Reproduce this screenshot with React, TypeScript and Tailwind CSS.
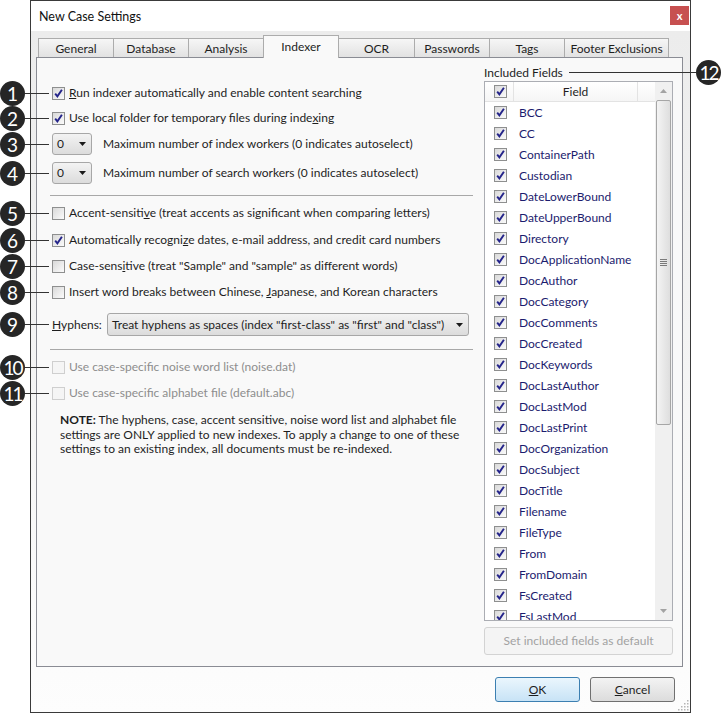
import type { ReactNode } from 'react';

const FIELDS = [
    'BCC', 'CC', 'ContainerPath', 'Custodian', 'DateLowerBound', 'DateUpperBound', 'Directory',
    'DocApplicationName', 'DocAuthor', 'DocCategory', 'DocComments', 'DocCreated', 'DocKeywords',
    'DocLastAuthor', 'DocLastMod', 'DocLastPrint', 'DocOrganization', 'DocSubject', 'DocTitle',
    'Filename', 'FileType', 'From', 'FromDomain', 'FsCreated', 'FsLastMod',
];

const TABS = [
    { label: 'General', w: 'w-[76px]' },
    { label: 'Database', w: 'w-[76px]' },
    { label: 'Analysis', w: 'w-[76px]' },
    { label: 'Indexer', w: 'w-[76px]', active: true },
    { label: 'OCR', w: 'w-[77px]' },
    { label: 'Passwords', w: 'w-[76px]' },
    { label: 'Tags', w: 'w-[76px]' },
    { label: 'Footer Exclusions', w: 'w-[105px]' },
];

// callout number + centre y
const CALLOUTS = [
    { n: '1', y: 93 }, { n: '2', y: 118 }, { n: '3', y: 144 }, { n: '4', y: 173 },
    { n: '5', y: 213 }, { n: '6', y: 240 }, { n: '7', y: 266 }, { n: '8', y: 292 },
    { n: '9', y: 324 }, { n: '10', y: 367 }, { n: '11', y: 393 },
];

function CheckBox({ checked, disabled }: { checked?: boolean; disabled?: boolean }) {
    return (
        <span
            className={`flex h-[13px] w-[13px] shrink-0 items-center justify-center border ${disabled
                ? 'border-[#cfcfcf] bg-[#f5f5f5]'
                : 'border-[#8e8f8f] bg-gradient-to-br from-[#d9d9d9] to-[#fbfbfb]'
                }`}
        >
            {checked && (
                <svg width="9" height="9" viewBox="0 0 9 9">
                    <path d="M1.2 4.6 L3.4 7.4 L7.9 0.8" fill="none" stroke="#24248a" strokeWidth="1.9" />
                </svg>
            )}
        </span>
    );
}

function CheckRow({ checked, disabled, className = '', children }: { checked?: boolean; disabled?: boolean; className?: string; children: ReactNode }) {
    return (
        <div className={`flex h-[20px] items-center gap-[4px] pl-[2px] ${disabled ? 'text-[#8d8d8d]' : 'text-[#1e1e1e]'} ${className}`}>
            <CheckBox checked={checked} disabled={disabled} />
            <span className="whitespace-nowrap">{children}</span>
        </div>
    );
}

function Arrow() {
    return (
        <svg width="7" height="4" viewBox="0 0 7 4">
            <path d="M0 0 H7 L3.5 4 Z" fill="#1a1a1a" />
        </svg>
    );
}

function WorkerSelect({ label, className = '' }: { label: string; className?: string }) {
    return (
        <div className={`flex h-[22px] items-center pl-[2px] ${className}`}>
            <div className="flex h-[22px] w-[40px] items-center justify-between rounded-[3px] border border-[#a7a7a7] bg-gradient-to-b from-[#f3f3f3] to-[#dcdcdc] pl-[4px] pr-[5px]">
                <span>0</span>
                <Arrow />
            </div>
            <span className="ml-[11px] whitespace-nowrap text-[#1e1e1e]">{label}</span>
        </div>
    );
}

function Callout({ n }: { n: string }) {
    return (
        <div className={`flex h-[25px] w-[25px] items-center justify-center rounded-full bg-[#262626] text-[19px] leading-none text-white ${n.length > 1 ? 'tracking-[-2px]' : ''}`}>
            {n}
        </div>
    );
}

export default function App() {
    return (
        <div className="relative h-[713px] w-[721px] overflow-hidden bg-white font-['Lato','Noto_Sans',sans-serif] text-[12px] text-[#1e1e1e]">
            <div className="ml-[30px] flex h-[713px] w-[661px] flex-col border border-[#3a3a3a]">
                {/* Title bar */}
                <div className="flex h-[30px] shrink-0 items-center justify-between bg-white pl-[8px] pr-[1px]">
                    <span className="pt-[2px] text-[12.5px] text-[#111]">New Case Settings</span>
                    <div className="mb-[1px] flex h-[19px] w-[19px] items-center justify-center bg-[#c75050] text-[11px] font-bold leading-none text-white">
                        x
                    </div>
                </div>

                {/* Body */}
                <div className="flex flex-1 flex-col bg-gradient-to-b from-[#ececec] via-[#f4f4f4] to-[#fdfdfd] px-[5px]">
                    {/* Tabs */}
                    <div className="mt-[5px] flex h-[21px] items-end pl-[2px]">
                        {TABS.map((t, i) => (
                            <div
                                key={t.label}
                                className={`${t.w} ${i > 0 ? '-ml-px' : ''} flex items-center justify-center border border-[#acacac] ${t.active
                                    ? 'relative z-10 mb-[-1px] h-[23px] border-b-0 bg-[#f9f9f9]'
                                    : 'h-[19px] border-b-0 bg-gradient-to-b from-[#f6f6f6] to-[#e2e2e2] pt-[2px]'
                                    }`}
                            >
                                {t.label}
                            </div>
                        ))}
                    </div>

                    {/* Panel */}
                    <div className="flex h-[610px] w-[647px] border border-[#8a8c94] bg-[#f9f9f9]">
                        {/* Left column */}
                        <div className="w-[447px] pl-[13px] pr-[9px] pt-[25px]">
                            <CheckRow checked>
                                <u>R</u>un indexer automatically and enable content searching
                            </CheckRow>
                            <CheckRow checked className="mt-[5px]">
                                Use local folder for temporary files during inde<u>x</u>ing
                            </CheckRow>
                            <WorkerSelect className="mt-[5px]" label="Maximum number of index workers (0 indicates autoselect)" />
                            <WorkerSelect className="mt-[7px]" label="Maximum number of search workers (0 indicates autoselect)" />
                            <div className="mt-[11px] h-px w-[423px] bg-[#a8a8a8]" />
                            <CheckRow className="mt-[7px]">
                                Accent-sensiti<u>v</u>e (treat accents as significant when comparing letters)
                            </CheckRow>
                            <CheckRow checked className="mt-[7px]">
                                Automatically recogni<u>z</u>e dates, e-mail address, and credit card numbers
                            </CheckRow>
                            <CheckRow className="mt-[6px]">
                                Case-sens<u>i</u>tive (treat "Sample" and "sample" as different words)
                            </CheckRow>
                            <CheckRow className="mt-[6px]">
                                Insert word breaks between Chinese, <u>J</u>apanese, and Korean characters
                            </CheckRow>
                            <div className="mt-[11px] flex h-[23px] items-center pl-[2px]">
                                <span className="w-[55px]"><u>H</u>yphens:</span>
                                <div className="flex h-[23px] w-[362px] items-center justify-between rounded-[3px] border border-[#a7a7a7] bg-gradient-to-b from-[#f3f3f3] to-[#dcdcdc] pl-[4px] pr-[5px]">
                                    <span className="whitespace-nowrap">Treat hyphens as spaces (index "first-class" as "first" and "class")</span>
                                    <Arrow />
                                </div>
                            </div>
                            <div className="mt-[13px] h-px w-[423px] bg-[#a8a8a8]" />
                            <CheckRow disabled className="mt-[7px]">
                                Use case-specific noise word list (noise.dat)
                            </CheckRow>
                            <CheckRow disabled className="mt-[6px]">
                                Use case-specific alphabet file (default.abc)
                            </CheckRow>
                            <p className="mt-[10px] pl-[10px] pr-[4px] leading-[14.5px] text-[#1e1e1e]">
                                <b>NOTE:</b> The hyphens, case, accent sensitive, noise word list and alphabet file
                                settings are ONLY applied to new indexes. To apply a change to one of these
                                settings to an existing index, all documents must be re-indexed.
                            </p>
                        </div>

                        {/* Right column */}
                        <div className="flex w-[189px] flex-col pt-[7px]">
                            <span className="h-[16px] leading-[16px]">Included Fields</span>
                            <div className="flex h-[540px] border border-[#abadb3] bg-white">
                                <div className="flex w-[170px] flex-col overflow-hidden">
                                    <div className="flex h-[20px] shrink-0 border-b border-[#e3e3e3] bg-gradient-to-b from-white to-[#f5f5f5]">
                                        <div className="flex w-[28px] items-center pl-[9px]">
                                            <CheckBox checked />
                                        </div>
                                        <div className="flex w-[124px] items-center justify-center border-l border-[#e3e3e3]">
                                            Field
                                        </div>
                                        <div className="flex-1 border-l border-[#e3e3e3]" />
                                    </div>
                                    {FIELDS.map(f => (
                                        <div key={f} className="flex h-[21px] shrink-0 items-center pl-[9px]">
                                            <CheckBox checked />
                                            <span className="ml-[12px] text-[#1c1c6e]">{f}</span>
                                        </div>
                                    ))}
                                </div>
                                {/* Scrollbar */}
                                <div className="flex w-[17px] flex-col bg-[#f0f0f0]">
                                    <div className="flex h-[18px] items-center justify-center">
                                        <svg width="7" height="4" viewBox="0 0 7 4">
                                            <path d="M0 4 H7 L3.5 0 Z" fill="#a3a3a3" />
                                        </svg>
                                    </div>
                                    <div className="mx-[1px] flex h-[325px] items-center justify-center rounded-[2px] border border-[#a6a6a6] bg-gradient-to-r from-[#f4f4f4] to-[#dedede]">
                                        <div className="flex w-[7px] flex-col gap-[1px]">
                                            <div className="h-px bg-[#7a7a7a]" />
                                            <div className="h-px bg-[#7a7a7a]" />
                                            <div className="h-px bg-[#7a7a7a]" />
                                            <div className="h-px bg-[#7a7a7a]" />
                                        </div>
                                    </div>
                                    <div className="flex-1" />
                                    <div className="flex h-[18px] items-center justify-center">
                                        <svg width="7" height="4" viewBox="0 0 7 4">
                                            <path d="M0 0 H7 L3.5 4 Z" fill="#a3a3a3" />
                                        </svg>
                                    </div>
                                </div>
                            </div>
                            <div className="mt-[6px] flex h-[28px] items-center justify-center rounded-[3px] border border-[#d3d3d3] bg-[#f4f4f4] text-[#a2a2a2]">
                                Set included fields as default
                            </div>
                        </div>
                    </div>

                    {/* Footer buttons */}
                    <div className="relative flex flex-1 items-start justify-end gap-[10px] pr-[10px] pt-[10px]">
                        <div className="flex h-[25px] w-[85px] items-center justify-center rounded-[3px] border border-[#3c7fb1] bg-gradient-to-b from-[#eaf6fd] to-[#c8e3f6]">
                            <u>O</u>K
                        </div>
                        <div className="flex h-[25px] w-[85px] items-center justify-center rounded-[3px] border border-[#707070] bg-gradient-to-b from-[#f3f3f3] to-[#dcdcdc]">
                            <u>C</u>ancel
                        </div>
                        <svg className="absolute bottom-[1px] right-[-4px]" width="11" height="11" viewBox="0 0 11 11">
                            {[[9, 1], [9, 4], [6, 4], [9, 7], [6, 7], [3, 7], [9, 10], [6, 10], [3, 10], [0, 10]].map(([x, y]) => (
                                <rect key={`${x}-${y}`} x={x} y={y - 1} width="1.5" height="1.5" fill="#b5b5b5" />
                            ))}
                        </svg>
                    </div>
                </div>
            </div>

            {/* Callouts */}
            {CALLOUTS.map(c => (
                <div key={c.n} className="absolute left-0 flex items-center" style={{ top: c.y - 12.5 }}>
                    <Callout n={c.n} />
                    <div className="h-px w-[24px] bg-[#333]" />
                </div>
            ))}
            <div className="absolute left-[569px] top-[60px] flex items-center">
                <div className="h-px w-[127px] bg-[#333]" />
                <Callout n="12" />
            </div>
        </div>
    );
}
